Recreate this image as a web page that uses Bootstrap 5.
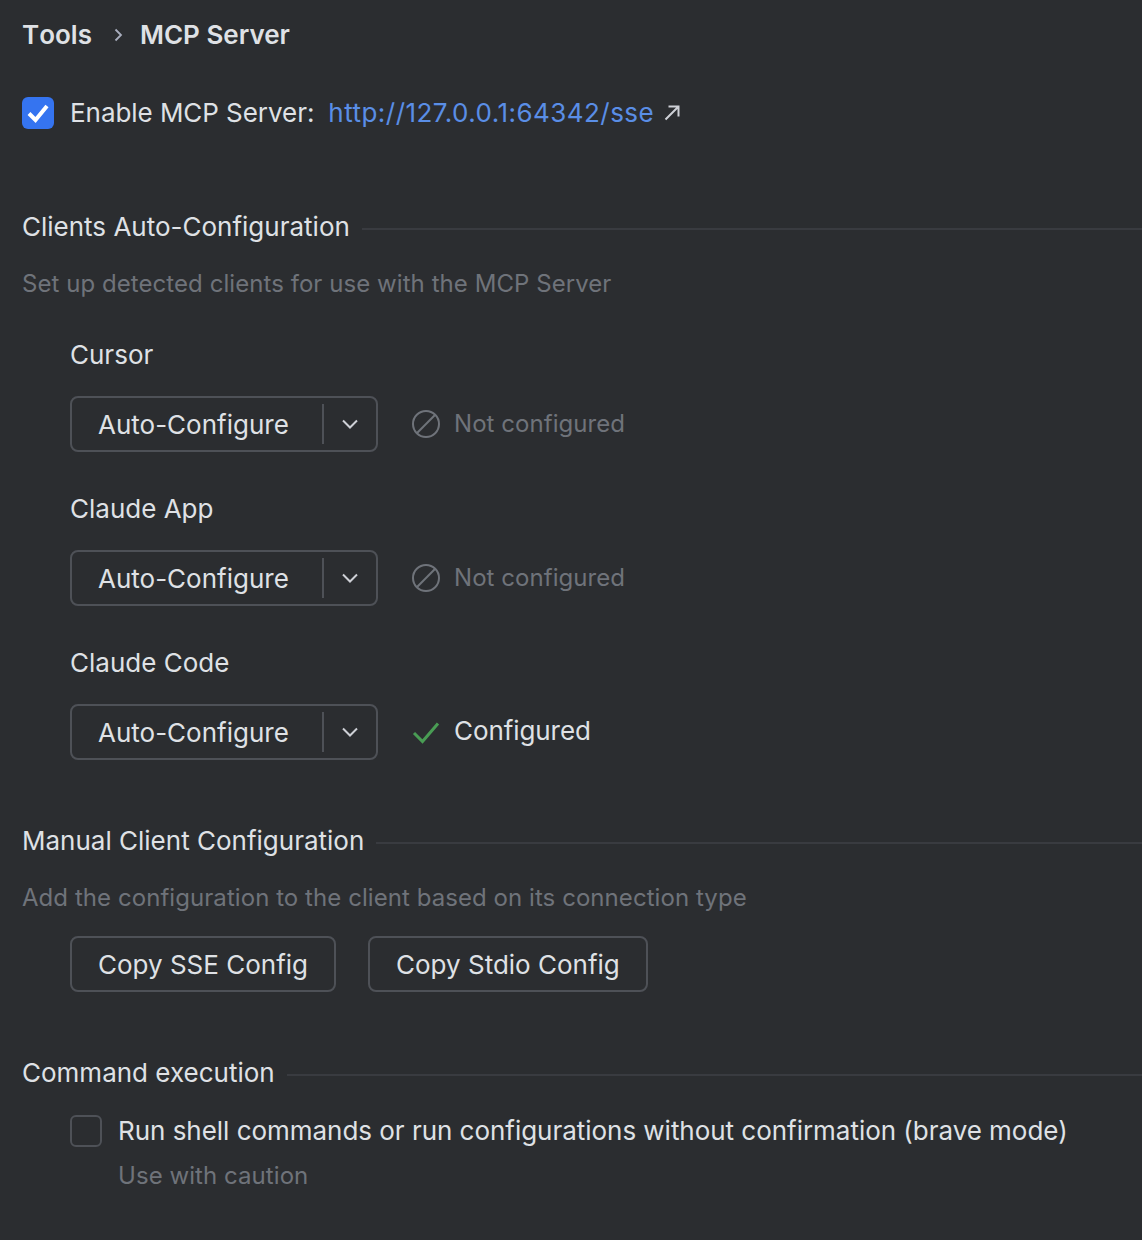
<!DOCTYPE html>
<html lang="en">
<head>
    <meta charset="UTF-8">
    <meta name="viewport" content="width=device-width, initial-scale=1.0">
    <title>MCP Server</title>
    <link href="https://cdn.jsdelivr.net/npm/bootstrap@5.3.0/dist/css/bootstrap.min.css" rel="stylesheet">
    <style>
        html, body { height: 100%; }
        body { background: #2b2d30; color: #dfe1e5; font-family: Inter, "Liberation Sans", sans-serif; font-size: 26px; line-height: 32px; overflow: hidden; }
        .page { padding: 19px 0 0 22px; }
        .crumbs { font-weight: 600; }
        .crumb-first { font-kerning: none; }
        .crumb-sep { width: 48px; display: flex; justify-content: center; padding-left: 4px; }
        .enable-row { margin-top: 46px; }
        .blue-box { width: 32px; height: 32px; border-radius: 6px; background: #3574f0; flex: none; margin-right: 16px; }
        .enable-label { letter-spacing: -.05px; }
        .mcp-link { color: #5a8ee6; text-decoration: none; margin-left: 14px; letter-spacing: .46px; }
        .ext-icon { margin-left: 9px; }
        .group-head { margin-top: 65px; gap: 12px; }
        .group-head.first { margin-top: 82px; }
        .group-line { flex: 1; height: 2px; background: #393b40; margin-top: 3px; }
        .hint { color: #6f737a; margin-top: 25px; font-size: 24px; letter-spacing: .06px; }
        .client-list { padding-left: 48px; }
        .client-name { margin-top: 41px; }
        .client-name.first { margin-top: 39px; }
        .client-row { margin-top: 25px; }
        .combo { width: 308px; height: 56px; border: 2px solid #4e5157; border-radius: 8px; padding-left: 26px; flex: none; }
        .combo-label { flex: 1; padding-top: 2px; }
        .combo-line { width: 2px; height: 40px; background: #4e5157; }
        .combo-arrow { width: 52px; display: flex; justify-content: center; }
        .state { margin-left: 33px; gap: 13px; }
        .state-off { color: #6f737a; font-size: 24px; letter-spacing: .06px; }
        .state-on-label { padding-bottom: 2px; letter-spacing: -.08px; }
        .copy-row { padding-left: 48px; margin-top: 22px; gap: 32px; }
        .copy-btn { height: 56px; border: 2px solid #4e5157; border-radius: 8px; background: transparent; color: #dfe1e5; font-size: 26px; line-height: 32px; padding: 2px 26px 0; }
        .copy-btn:hover { background: transparent; color: #dfe1e5; border-color: #4e5157; }
        .brave-row { padding-left: 48px; margin-top: 26px; }
        .brave-label { letter-spacing: -.03px; }
        .empty-box { width: 32px; height: 32px; border: 2px solid #4e5157; border-radius: 6px; flex: none; margin-right: 16px; }
        .caution { padding-left: 96px; margin-top: 13px; color: #6f737a; font-size: 24px; letter-spacing: .06px; }
    </style>
</head>
<body>
<div class="page">
    <div class="crumbs d-flex align-items-center">
        <span class="crumb-first">Tools</span>
        <span class="crumb-sep">
            <svg width="10" height="16" viewBox="0 0 10 16"><path d="M2.5 2.500 8 8l-5.500 5.500" fill="none" stroke="#a8adbd" stroke-width="1.800"/></svg>
        </span>
        <span>MCP Server</span>
    </div>

    <div class="enable-row d-flex align-items-center">
        <span class="blue-box d-flex align-items-center justify-content-center">
            <svg width="26" height="26" viewBox="0 0 26 26"><path d="M4 13.500 10.500 20 22 6" fill="none" stroke="#fff" stroke-width="4"/></svg>
        </span>
        <span class="enable-label">Enable MCP Server:</span>
        <a class="mcp-link" href="#">http://127.0.0.1:64342/sse</a>
        <svg class="ext-icon" width="18" height="18" viewBox="0 0 18 18"><path d="M2.500 15.500 15 3M5.500 2.500H15.500V12.500" fill="none" stroke="#ced0d6" stroke-width="2"/></svg>
    </div>

    <div class="group-head first d-flex align-items-center">
        <span>Clients Auto-Configuration</span><span class="group-line"></span>
    </div>
    <div class="hint">Set up detected clients for use with the MCP Server</div>

    <div class="client-list">
        <div class="client-name first">Cursor</div>
        <div class="client-row d-flex align-items-center">
            <div class="combo d-flex align-items-center">
                <span class="combo-label">Auto-Configure</span><span class="combo-line"></span>
                <span class="combo-arrow"><svg width="18" height="12" viewBox="0 0 18 12"><path d="M2 2.500 9 9.500l7-7" fill="none" stroke="#ced0d6" stroke-width="2"/></svg></span>
            </div>
            <div class="state state-off d-flex align-items-center">
                <svg width="30" height="30" viewBox="0 0 30 30"><circle cx="15" cy="15" r="13" fill="none" stroke="#6f737a" stroke-width="2"/><path d="M5.800 24.200 24.200 5.800" stroke="#6f737a" stroke-width="2"/></svg>
                <span>Not configured</span>
            </div>
        </div>

        <div class="client-name">Claude App</div>
        <div class="client-row d-flex align-items-center">
            <div class="combo d-flex align-items-center">
                <span class="combo-label">Auto-Configure</span><span class="combo-line"></span>
                <span class="combo-arrow"><svg width="18" height="12" viewBox="0 0 18 12"><path d="M2 2.500 9 9.500l7-7" fill="none" stroke="#ced0d6" stroke-width="2"/></svg></span>
            </div>
            <div class="state state-off d-flex align-items-center">
                <svg width="30" height="30" viewBox="0 0 30 30"><circle cx="15" cy="15" r="13" fill="none" stroke="#6f737a" stroke-width="2"/><path d="M5.800 24.200 24.200 5.800" stroke="#6f737a" stroke-width="2"/></svg>
                <span>Not configured</span>
            </div>
        </div>

        <div class="client-name">Claude Code</div>
        <div class="client-row d-flex align-items-center">
            <div class="combo d-flex align-items-center">
                <span class="combo-label">Auto-Configure</span><span class="combo-line"></span>
                <span class="combo-arrow"><svg width="18" height="12" viewBox="0 0 18 12"><path d="M2 2.500 9 9.500l7-7" fill="none" stroke="#ced0d6" stroke-width="2"/></svg></span>
            </div>
            <div class="state d-flex align-items-center">
                <svg width="30" height="30" viewBox="0 0 30 30"><path d="M3 16 11.500 24.500 27 6.500" fill="none" stroke="#499c54" stroke-width="3"/></svg>
                <span class="state-on-label">Configured</span>
            </div>
        </div>
    </div>

    <div class="group-head d-flex align-items-center">
        <span>Manual Client Configuration</span><span class="group-line"></span>
    </div>
    <div class="hint">Add the configuration to the client based on its connection type</div>
    <div class="copy-row d-flex">
        <button type="button" class="btn copy-btn">Copy SSE Config</button>
        <button type="button" class="btn copy-btn">Copy Stdio Config</button>
    </div>

    <div class="group-head d-flex align-items-center">
        <span>Command execution</span><span class="group-line"></span>
    </div>
    <div class="brave-row d-flex align-items-center">
        <span class="empty-box"></span>
        <span class="brave-label">Run shell commands or run configurations without confirmation (brave mode)</span>
    </div>
    <div class="caution">Use with caution</div>
</div>
<script src="https://cdn.jsdelivr.net/npm/bootstrap@5.3.0/dist/js/bootstrap.bundle.min.js"></script>
</body>
</html>
